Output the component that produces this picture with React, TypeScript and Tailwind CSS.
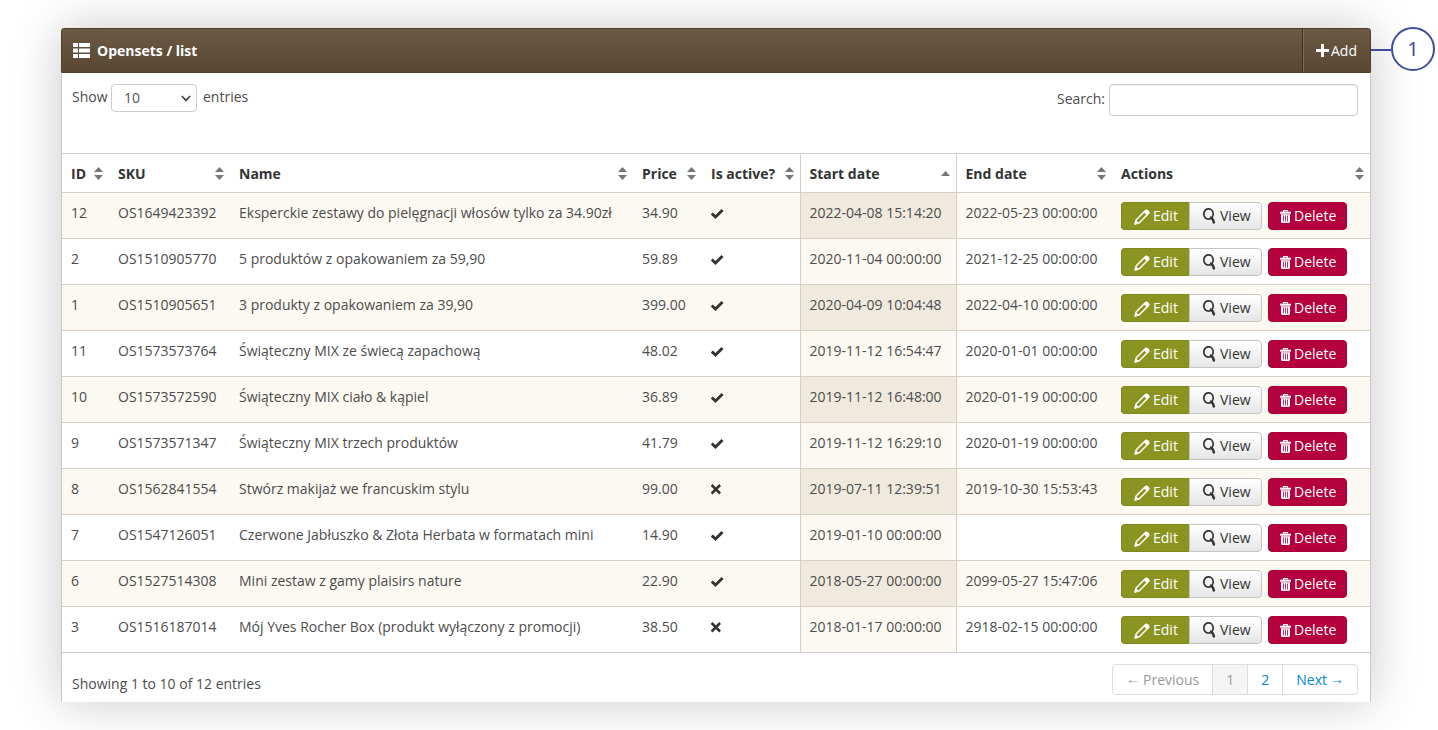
import { useState } from 'react';

type Openset = {
  id: number;
  sku: string;
  name: string;
  price: string;
  active: boolean;
  start: string;
  end: string;
};

type Column = {
  label: string;
  width: string;
  sorted?: boolean;
};

const COLUMNS: Column[] = [
  { label: 'ID', width: 'w-[47px]' },
  { label: 'SKU', width: 'w-[121px]' },
  { label: 'Name', width: '' },
  { label: 'Price', width: 'w-[69px]' },
  { label: 'Is active?', width: 'w-[98px]' },
  { label: 'Start date', width: 'w-[156px]', sorted: true },
  { label: 'End date', width: 'w-[156px]' },
  { label: 'Actions', width: 'w-[258px]' },
];

const ROWS: Openset[] = [
  { id: 12, sku: 'OS1649423392', name: 'Eksperckie zestawy do pielęgnacji włosów tylko za 34.90zł', price: '34.90', active: true, start: '2022-04-08 15:14:20', end: '2022-05-23 00:00:00' },
  { id: 2, sku: 'OS1510905770', name: '5 produktów z opakowaniem za 59,90', price: '59.89', active: true, start: '2020-11-04 00:00:00', end: '2021-12-25 00:00:00' },
  { id: 1, sku: 'OS1510905651', name: '3 produkty z opakowaniem za 39,90', price: '399.00', active: true, start: '2020-04-09 10:04:48', end: '2022-04-10 00:00:00' },
  { id: 11, sku: 'OS1573573764', name: 'Świąteczny MIX ze świecą zapachową', price: '48.02', active: true, start: '2019-11-12 16:54:47', end: '2020-01-01 00:00:00' },
  { id: 10, sku: 'OS1573572590', name: 'Świąteczny MIX ciało & kąpiel', price: '36.89', active: true, start: '2019-11-12 16:48:00', end: '2020-01-19 00:00:00' },
  { id: 9, sku: 'OS1573571347', name: 'Świąteczny MIX trzech produktów', price: '41.79', active: true, start: '2019-11-12 16:29:10', end: '2020-01-19 00:00:00' },
  { id: 8, sku: 'OS1562841554', name: 'Stwórz makijaż we francuskim stylu', price: '99.00', active: false, start: '2019-07-11 12:39:51', end: '2019-10-30 15:53:43' },
  { id: 7, sku: 'OS1547126051', name: 'Czerwone Jabłuszko & Złota Herbata w formatach mini', price: '14.90', active: true, start: '2019-01-10 00:00:00', end: '' },
  { id: 6, sku: 'OS1527514308', name: 'Mini zestaw z gamy plaisirs nature', price: '22.90', active: true, start: '2018-05-27 00:00:00', end: '2099-05-27 15:47:06' },
  { id: 3, sku: 'OS1516187014', name: 'Mój Yves Rocher Box (produkt wyłączony z promocji)', price: '38.50', active: false, start: '2018-01-17 00:00:00', end: '2918-02-15 00:00:00' },
];

function ListIcon() {
  return (
    <svg className="w-[17px] h-[15px]" viewBox="0 0 17 15" fill="currentColor" aria-hidden="true">
      <path d="M0 0h5v4H0zM6 0h11v4H6zM0 5.5h5v4H0zM6 5.5h11v4H6zM0 11h5v4H0zM6 11h11v4H6z" />
    </svg>
  );
}

function PlusIcon() {
  return (
    <svg className="w-[13px] h-[13px]" viewBox="0 0 13 13" fill="currentColor" aria-hidden="true">
      <path d="M5 0h3v5h5v3H8v5H5V8H0V5h5z" />
    </svg>
  );
}

function SortIcon({ sorted }: { sorted?: boolean }) {
  return (
    <svg className="w-[9px] h-[13px] shrink-0" viewBox="0 0 9 13" fill="#777777" aria-hidden="true">
      {sorted ? (
        <path d="M4.5 4L9 9H0z" />
      ) : (
        <path d="M4.5 0L9 5H0zM0 8h9l-4.5 5z" />
      )}
    </svg>
  );
}

function PencilIcon() {
  return (
    <svg className="w-4 h-4" viewBox="0 0 16 16" fill="none" stroke="currentColor" aria-hidden="true">
      <path d="M1 15l1.3-4.3L11.5 1.500c1.200-1.200 4.200 1.800 3 3L5.300 13.700z" strokeWidth="1.500" strokeLinejoin="round" />
      <path d="M10.500 3l2.500 2.500" strokeWidth="1.200" />
      <path d="M1 15l1-3.200 2.200 2.200z" fill="currentColor" />
      <path d="M11.500 1.500c1.200-1.200 4.200 1.800 3 3l-1.200 1.200-3-3z" fill="currentColor" stroke="none" />
    </svg>
  );
}

function MagnifierIcon() {
  return (
    <svg className="w-[13px] h-4" viewBox="0 0 13 16" fill="none" stroke="currentColor" aria-hidden="true">
      <ellipse cx="5.500" cy="6" rx="4.700" ry="5.200" strokeWidth="1.700" />
      <path d="M8 9.500q2.200 1.500 2.900 4.900" strokeWidth="2.500" strokeLinecap="round" />
    </svg>
  );
}

function TrashIcon() {
  return (
    <svg className="w-[11px] h-[13px]" viewBox="0 0 11 13" aria-hidden="true">
      <path d="M3.500 1.800V.6h4v1.200" fill="none" stroke="currentColor" strokeWidth="1.200" />
      <path d="M0 1.700h11v2H0z" fill="currentColor" />
      <path d="M1 4.300h9V12l-1 1H2l-1-1z" fill="currentColor" />
      <path d="M3.500 5.500v6M5.500 5.500v6M7.500 5.500v6" stroke="#b4003c" strokeWidth=".8" />
    </svg>
  );
}

function StatusIcon({ active }: { active: boolean }) {
  return active ? (
    <svg className="w-[13px] h-5" viewBox="0 0 13 20" role="img" aria-label="Yes">
      <path d="M.8 10.500l3.700 3.500L11.500 7" fill="none" stroke="#333333" strokeWidth="3" />
    </svg>
  ) : (
    <svg className="w-[13px] h-5" viewBox="0 0 13 20" role="img" aria-label="No">
      <path d="M.6 6l8.500 8.500M9.100 6L.6 14.500" fill="none" stroke="#333333" strokeWidth="2.500" />
    </svg>
  );
}

function RowActions() {
  return (
    <div className="flex gap-[6px]">
      <div className="flex">
        <button className="flex items-center gap-[3px] h-7 w-[68px] pl-3 rounded-l bg-[#8b9420] border border-[#7f881d] border-r-0 text-white">
          <span className="pt-[2px]"><PencilIcon /></span>
          Edit
        </button>
        <button className="flex items-center gap-1 h-7 w-[73px] pl-[13px] rounded-r bg-linear-to-b from-white to-[#e6e6e6] border border-[#c5c5c5] text-[#333333]">
          <MagnifierIcon />
          View
        </button>
      </div>
      <button className="flex items-center gap-[3px] h-7 w-[79px] pl-[11px] rounded bg-[#b4003c] border border-[#a80038] text-white">
        <TrashIcon />
        Delete
      </button>
    </div>
  );
}

export default function App() {
  const [pageSize, setPageSize] = useState('10');
  const [search, setSearch] = useState('');

  return (
    <div className="bg-white overflow-hidden pt-7 pb-7 pl-[61px] pr-[67px] font-['Open_Sans',sans-serif] text-sm leading-5 text-[#4c4c4c]">
      <div className="relative bg-white rounded-t-[3px] shadow-[0_0_50px_rgba(0,0,0,0.22)]">
        <header className="flex h-[45px] rounded-t-[3px] bg-linear-to-b from-[#6b5944] to-[#594732] border border-[#4f3e29] text-white">
          <div className="flex flex-1 items-center gap-[7px] pl-[11px]">
            <ListIcon />
            <h1 className="font-bold">Opensets / list</h1>
          </div>
          <button className="flex items-center gap-[2px] px-[13px] border-l border-[#3f3223] shadow-[inset_1px_0_0_#7c6b56]">
            <PlusIcon />
            Add
          </button>
        </header>

        {/* callout marker for the Add button */}
        <div className="absolute left-full top-0 flex items-center">
          <span className="w-5 h-[2px] bg-[#3f4d9c]" />
          <span className="flex items-center justify-center w-11 h-11 -mt-px rounded-full border-2 border-[#3f4d9c] bg-white text-[#3f4d9c] text-xl font-['Noto_Sans',sans-serif]">
            1
          </span>
        </div>

        <div className="border-x border-[#cfc8c0]">
          <div className="flex justify-between items-start h-20 pt-[11px] pl-[10px] pr-3">
            <label className="flex items-center">
              <span className="w-[39px] -mt-[2px]">Show</span>
              <span className="relative">
                <select
                  value={pageSize}
                  onChange={(e) => setPageSize(e.target.value)}
                  className="appearance-none block w-[86px] h-7 pl-3 rounded border border-[#cccccc] bg-white text-[#555555]"
                >
                  <option>10</option>
                  <option>25</option>
                  <option>50</option>
                </select>
                <svg className="absolute right-[6px] top-[11px] w-[10px] h-[7px] pointer-events-none" viewBox="0 0 10 7" fill="none" stroke="#444444" strokeWidth="1.700" aria-hidden="true">
                  <path d="M.8 1L5 5.400 9.200 1" />
                </svg>
              </span>
              <span className="ml-[6px] -mt-[2px]">entries</span>
            </label>
            <label className="flex items-center gap-1">
              <span className="-mt-[2px]">Search:</span>
              <input
                type="text"
                value={search}
                onChange={(e) => setSearch(e.target.value)}
                className="w-[249px] h-8 px-2 rounded border border-[#cccccc] shadow-[inset_0_1px_1px_rgba(0,0,0,0.075)]"
              />
            </label>
          </div>

          <table className="w-full table-fixed border-collapse">
            <thead>
              <tr className="h-[39px] border-y border-[#d6cfc8]">
                {COLUMNS.map(({ label, width, sorted }) => (
                  <th key={label} className={`p-0 pt-px ${width} ${sorted ? 'border-x border-[#d6cfc8]' : ''}`}>
                    <button className="flex items-center justify-between w-full pl-[9px] pr-[6px] font-bold text-[#333333] whitespace-nowrap">
                      {label}
                      <SortIcon sorted={sorted} />
                    </button>
                  </th>
                ))}
              </tr>
            </thead>
            <tbody>
              {ROWS.map((row) => (
                <tr key={row.id} className="group h-[46px] align-top border-b border-[#d6cfc8] odd:bg-[#fcf9f2] *:pl-[9px] *:pt-[10px] *:last:pt-[9px] whitespace-nowrap">
                  <td>{row.id}</td>
                  <td>{row.sku}</td>
                  <td>{row.name}</td>
                  <td>{row.price}</td>
                  <td><StatusIcon active={row.active} /></td>
                  <td className="border-x border-[#d6cfc8] bg-[#fcf9f2] group-odd:bg-[#f0e9de]">{row.start}</td>
                  <td>{row.end}</td>
                  <td><RowActions /></td>
                </tr>
              ))}
            </tbody>
          </table>

          <footer className="flex justify-between h-[49px] pt-[11px] pl-[10px] pr-3">
            <p className="pt-[10px]">Showing 1 to 10 of 12 entries</p>
            <nav className="flex h-[31px] rounded border border-[#dddddd] leading-[29px]">
              <a href="#" className="flex gap-[3px] px-[13px] text-[#999999]">
                <span className="font-['Liberation_Sans',sans-serif]">←</span>
                Previous
              </a>
              <a href="#" className="px-[13px] border-l border-[#dddddd] bg-[#f5f5f5] text-[#999999]">1</a>
              <a href="#" className="px-[13px] border-l border-[#dddddd] text-[#0088cc]">2</a>
              <a href="#" className="flex gap-[3px] px-[13px] border-l border-[#dddddd] text-[#0088cc]">
                Next
                <span className="font-['Liberation_Sans',sans-serif]">→</span>
              </a>
            </nav>
          </footer>
        </div>
      </div>
    </div>
  );
}
